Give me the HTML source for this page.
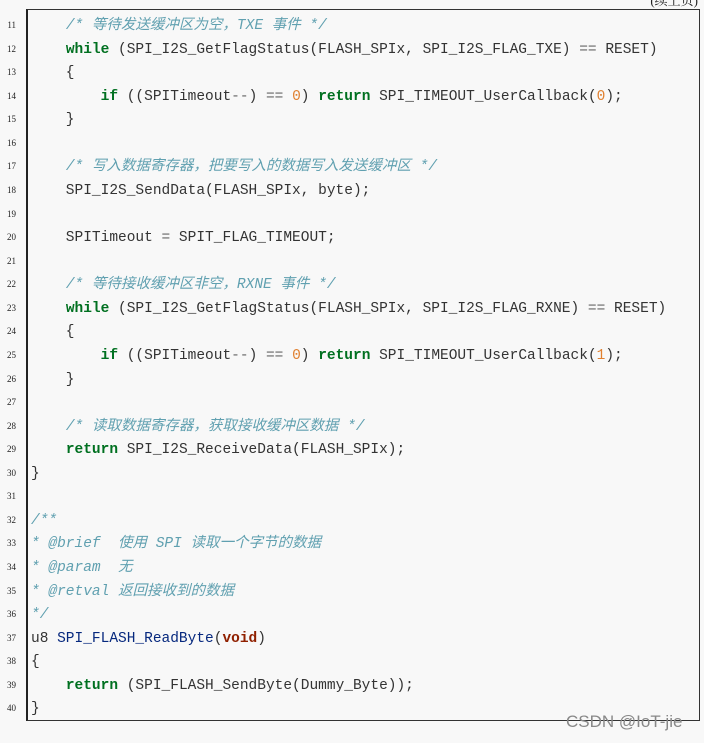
<!DOCTYPE html>
<html><head><meta charset="utf-8"><style>
html,body{margin:0;padding:0;background:#f8f8f8;width:704px;height:743px;overflow:hidden;position:relative}
.box{position:absolute;left:26px;top:9px;width:671px;height:710px;border:1px solid #333;border-left:2px solid #222;background:#f8f8f8}
.ln{position:absolute;left:0;width:16px;text-align:right;font:9px/12px "Liberation Serif",serif;color:#222}
.c{position:absolute;left:31px;white-space:pre;font:14.5px/18px "Liberation Mono","Noto Sans CJK SC",monospace;color:#333;height:18px;margin-top:2px}
.c span{line-height:18px}
.cm{color:#60a0b0;font-style:italic}
.k{color:#007020;font-weight:bold}
.n{color:#e08030}
.f{color:#06287e}
.t{color:#902000;font-weight:bold}
.o{color:#666}
.top{position:absolute;right:6px;top:-10px;font:13px "Liberation Serif","Noto Serif CJK SC",serif;color:#222}
.wm{position:absolute;left:566px;top:712px;font:17px "Liberation Sans",sans-serif;color:#888}
</style></head><body>
<div class="top">(续上页)</div>
<div class="box"></div>
<div class="wm">CSDN @IoT-jie</div>
<div class="ln" style="top:19px">11</div><div class="c" style="top:15px">    <span class="cm">/* 等待发送缓冲区为空，TXE 事件 */</span></div>
<div class="ln" style="top:43px">12</div><div class="c" style="top:39px">    <span class="k">while</span> (SPI_I2S_GetFlagStatus(FLASH_SPIx, SPI_I2S_FLAG_TXE) <span class="o">==</span> RESET)</div>
<div class="ln" style="top:66px">13</div><div class="c" style="top:62px">    {</div>
<div class="ln" style="top:90px">14</div><div class="c" style="top:86px">        <span class="k">if</span> ((SPITimeout<span class="o">--</span>) <span class="o">==</span> <span class="n">0</span>) <span class="k">return</span> SPI_TIMEOUT_UserCallback(<span class="n">0</span>);</div>
<div class="ln" style="top:113px">15</div><div class="c" style="top:109px">    }</div>
<div class="ln" style="top:137px">16</div>
<div class="ln" style="top:160px">17</div><div class="c" style="top:156px">    <span class="cm">/* 写入数据寄存器，把要写入的数据写入发送缓冲区 */</span></div>
<div class="ln" style="top:184px">18</div><div class="c" style="top:180px">    SPI_I2S_SendData(FLASH_SPIx, byte);</div>
<div class="ln" style="top:208px">19</div>
<div class="ln" style="top:231px">20</div><div class="c" style="top:227px">    SPITimeout <span class="o">=</span> SPIT_FLAG_TIMEOUT;</div>
<div class="ln" style="top:255px">21</div>
<div class="ln" style="top:278px">22</div><div class="c" style="top:274px">    <span class="cm">/* 等待接收缓冲区非空，RXNE 事件 */</span></div>
<div class="ln" style="top:302px">23</div><div class="c" style="top:298px">    <span class="k">while</span> (SPI_I2S_GetFlagStatus(FLASH_SPIx, SPI_I2S_FLAG_RXNE) <span class="o">==</span> RESET)</div>
<div class="ln" style="top:325px">24</div><div class="c" style="top:321px">    {</div>
<div class="ln" style="top:349px">25</div><div class="c" style="top:345px">        <span class="k">if</span> ((SPITimeout<span class="o">--</span>) <span class="o">==</span> <span class="n">0</span>) <span class="k">return</span> SPI_TIMEOUT_UserCallback(<span class="n">1</span>);</div>
<div class="ln" style="top:373px">26</div><div class="c" style="top:369px">    }</div>
<div class="ln" style="top:396px">27</div>
<div class="ln" style="top:420px">28</div><div class="c" style="top:416px">    <span class="cm">/* 读取数据寄存器，获取接收缓冲区数据 */</span></div>
<div class="ln" style="top:443px">29</div><div class="c" style="top:439px">    <span class="k">return</span> SPI_I2S_ReceiveData(FLASH_SPIx);</div>
<div class="ln" style="top:467px">30</div><div class="c" style="top:463px">}</div>
<div class="ln" style="top:490px">31</div>
<div class="ln" style="top:514px">32</div><div class="c" style="top:510px"><span class="cm">/**</span></div>
<div class="ln" style="top:537px">33</div><div class="c" style="top:533px"><span class="cm">* @brief  使用 SPI 读取一个字节的数据</span></div>
<div class="ln" style="top:561px">34</div><div class="c" style="top:557px"><span class="cm">* @param  无</span></div>
<div class="ln" style="top:585px">35</div><div class="c" style="top:581px"><span class="cm">* @retval 返回接收到的数据</span></div>
<div class="ln" style="top:608px">36</div><div class="c" style="top:604px"><span class="cm">*/</span></div>
<div class="ln" style="top:632px">37</div><div class="c" style="top:628px">u8 <span class="f">SPI_FLASH_ReadByte</span>(<span class="t">void</span>)</div>
<div class="ln" style="top:655px">38</div><div class="c" style="top:651px">{</div>
<div class="ln" style="top:679px">39</div><div class="c" style="top:675px">    <span class="k">return</span> (SPI_FLASH_SendByte(Dummy_Byte));</div>
<div class="ln" style="top:702px">40</div><div class="c" style="top:698px">}</div>
</body></html>
